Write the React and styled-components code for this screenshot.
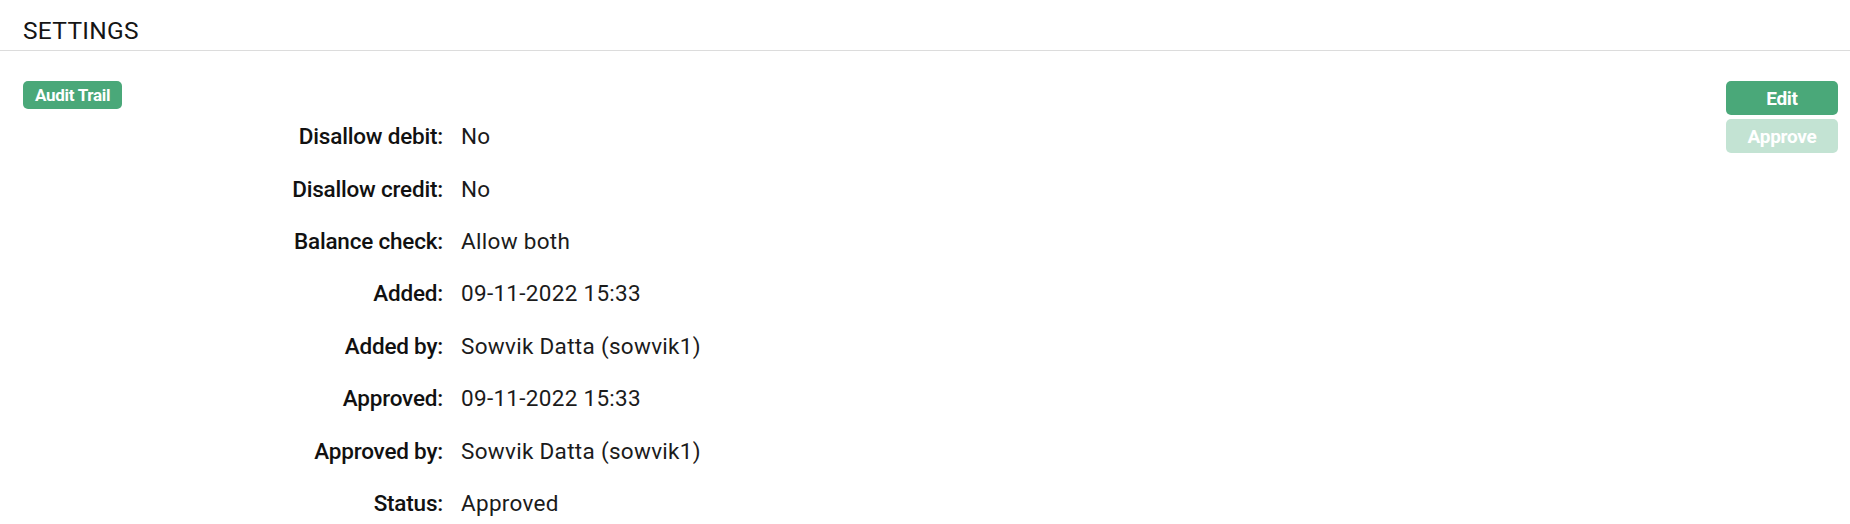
import React from 'react'
import styled, { createGlobalStyle } from 'styled-components'

const GlobalStyle = createGlobalStyle`
  * { box-sizing: border-box; }
  html, body { margin: 0; padding: 0; background: #fff; }
  body {
    font-family: Roboto, "Noto Sans", "Liberation Sans", sans-serif;
    color: #1b1b1b;
  }
`

const Page = styled.div`
  width: 100%;
`

const Header = styled.div`
  height: 51px;
  padding: 17px 23px 0;
  border-bottom: 1px solid #dcdcdc;
`

const Title = styled.h2`
  margin: 0;
  font-size: 24.5px;
  line-height: 28px;
  font-weight: 400;
  letter-spacing: 0.3px;
  color: #151515;
`

const Body = styled.div`
  display: flex;
  align-items: flex-start;
  padding: 30px 12px 0 23px;
`

const Main = styled.div`
  flex: 1;
`

const Badge = styled.span`
  display: inline-flex;
  align-items: center;
  height: 28px;
  padding: 0 12px;
  border-radius: 5px;
  background: #4aa879;
  color: #fff;
  font-size: 17px;
  font-weight: 700;
  letter-spacing: -0.3px;
`

const Details = styled.dl`
  margin: 1px 0 0 0;
  display: grid;
  grid-template-columns: 420px 1fr;
  column-gap: 18px;
  grid-auto-rows: 52.4px;
  align-items: center;
  font-size: 22.5px;
`

const Label = styled.dt`
  text-align: right;
  font-weight: 500;
  color: #111;
  letter-spacing: -0.2px;
`

const Value = styled.dd`
  margin: 0;
  font-weight: 400;
  color: #1b1b1b;
  letter-spacing: 0.3px;
`

const Actions = styled.div`
  width: 112px;
  display: flex;
  flex-direction: column;
  gap: 4px;
`

const Button = styled.button`
  height: 34px;
  width: 100%;
  border: none;
  border-radius: 5px;
  background: ${p => (p.$disabled ? '#c3e3d3' : '#4aa879')};
  color: #fff;
  font-family: inherit;
  font-size: 19px;
  font-weight: 700;
  letter-spacing: -0.3px;
  cursor: ${p => (p.$disabled ? 'default' : 'pointer')};
`

const rows = [
  ['Disallow debit:', 'No'],
  ['Disallow credit:', 'No'],
  ['Balance check:', 'Allow both'],
  ['Added:', '09-11-2022 15:33'],
  ['Added by:', 'Sowvik Datta (sowvik1)'],
  ['Approved:', '09-11-2022 15:33'],
  ['Approved by:', 'Sowvik Datta (sowvik1)'],
  ['Status:', 'Approved'],
]

export default function App() {
  return (
    <Page>
      <GlobalStyle />
      <Header>
        <Title>SETTINGS</Title>
      </Header>
      <Body>
        <Main>
          <Badge>Audit Trail</Badge>
          <Details>
            {rows.map(([k, v]) => (
              <React.Fragment key={k}>
                <Label>{k}</Label>
                <Value>{v}</Value>
              </React.Fragment>
            ))}
          </Details>
        </Main>
        <Actions>
          <Button>Edit</Button>
          <Button $disabled>Approve</Button>
        </Actions>
      </Body>
    </Page>
  )
}
